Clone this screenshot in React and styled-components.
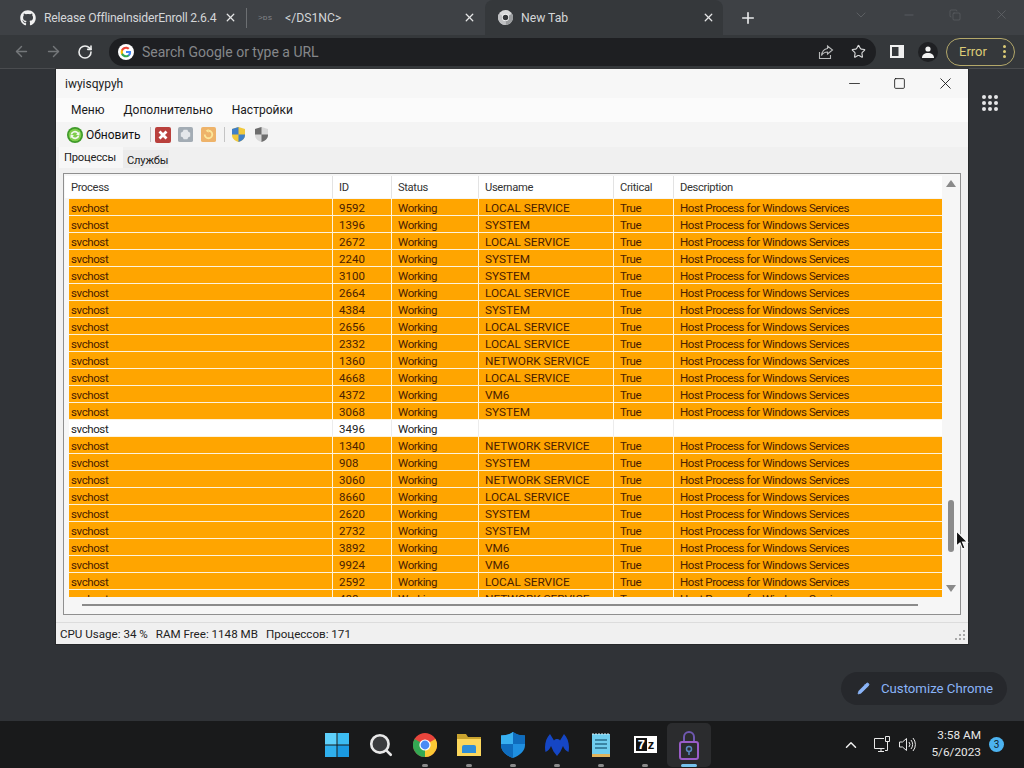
import styled, { createGlobalStyle } from "styled-components";
import { FaGithub } from "react-icons/fa";
import { ArrowLeft, ArrowRight, RotateCw, Star, X, Plus, ChevronDown, ChevronUp, Minus, Square, Copy, Pencil, Search } from "lucide-react";

const GlobalStyle = createGlobalStyle`
  html, body { margin: 0; padding: 0; background: #303337; overflow: hidden; }
  * { box-sizing: border-box; }
`;

const Screen = styled.div`
  width: 1024px;
  height: 768px;
  display: flex;
  flex-direction: column;
  font-family: Roboto, "Noto Sans", sans-serif;
  position: relative;
  overflow: hidden;
`;

/* chrome */
const TabStrip = styled.div`
  height: 35px;
  background: #3e4145;
  display: flex;
  align-items: stretch;
  color: #dfe1e3;
`;
const Tab = styled.div`
  width: ${(p) => p.$w}px;
  display: flex;
  align-items: center;
  gap: 8px;
  padding-left: ${(p) => p.$pad}px;
  background: ${(p) => (p.$active ? "#35383b" : "transparent")};
  border-radius: ${(p) => (p.$active ? "8px 8px 0 0" : "0")};
  font-size: 12.2px;
  white-space: nowrap;
`;
const TabTitle = styled.span`
  width: ${(p) => p.$w}px;
  color: #d4d6d8;
  letter-spacing: ${(p) => (p.$tight ? "-0.2px" : "0")};
`;
const TabClose = styled.span`
  display: flex;
  margin-left: auto;
  margin-right: ${(p) => p.$mr}px;
  color: #e4e5e6;
`;
const TermGlyph = styled.span`
  font-size: 8px;
  color: #85878a;
  font-family: "Liberation Mono", monospace;
  width: 16px;
  margin-right: 3px;
`;
const TabDivider = styled.div`
  width: 1px;
  height: 20px;
  background: #6c6f72;
  align-self: center;
`;
const NewTab = styled.div`
  display: flex;
  align-items: center;
  margin-left: 16px;
  color: #e8e9ea;
`;
const WinControls = styled.div`
  margin-left: auto;
  display: flex;
  align-items: center;
  gap: 33px;
  padding: 0 15px 6px 0;
  color: #63666a;
`;
const ToolBar = styled.div`
  height: 34px;
  background: #35383b;
  display: flex;
  align-items: center;
  padding-left: 13px;
  border-bottom: 1px solid #4a4c4f;
`;
const NavIcon = styled.span`
  display: flex;
  width: 32px;
  color: ${(p) => (p.$on ? "#eceded" : "#74777a")};
`;
const Omnibox = styled.div`
  width: 767px;
  height: 28px;
  border-radius: 14px;
  background: #1e1f22;
  display: flex;
  align-items: center;
  padding: 0 10px 0 9px;
`;
const OmniText = styled.span`
  margin-left: 8px;
  font-size: 14px;
  color: #85878a;
`;
const OmniIcons = styled.div`
  margin-left: auto;
  display: flex;
  align-items: center;
  gap: 17px;
  color: #d8d9da;
`;
const ToolRight = styled.div`
  display: flex;
  align-items: center;
  margin-left: 14px;
`;
const Avatar = styled.span`
  width: 20px;
  height: 20px;
  margin-left: 14px;
  border-radius: 50%;
  background: #1f2023;
  display: flex;
  align-items: center;
  justify-content: center;
`;
const ErrorPill = styled.div`
  margin-left: 8px;
  width: 69px;
  height: 28px;
  border: 1px solid #b4a86a;
  border-radius: 14px;
  display: flex;
  align-items: center;
  justify-content: space-between;
  padding: 0 8px 0 12px;
  color: #dccb76;
  font-size: 13px;
`;
const Dots = styled.span`
  display: flex;
  flex-direction: column;
  gap: 2px;
  i { width: 3px; height: 3px; border-radius: 50%; background: #dccb76; display: block; }
`;

/* new tab page behind the window */
const Page = styled.div`
  flex: 1;
  position: relative;
  background: #303337;
  display: flex;
  flex-direction: column;
  align-items: flex-end;
  padding: 26px 17px 16px 0;
`;
const AppsGrid = styled.div`
  display: grid;
  grid-template-columns: repeat(3, 4px);
  gap: 2px;
  margin-right: 9px;
  i { width: 4px; height: 4px; border-radius: 50%; background: #e5e6e7; display: block; }
`;
const CustomizeBtn = styled.div`
  margin-top: auto;
  height: 33px;
  width: 166px;
  border-radius: 17px;
  background: #26282c;
  display: flex;
  align-items: center;
  gap: 11px;
  padding-left: 16px;
  font-size: 13.2px;
  color: #8ab4f8;
  svg { color: #8ab4f8; }
`;

/* the app window */
const Win = styled.div`
  position: absolute;
  left: 56px;
  top: 0;
  width: 912px;
  height: 575px;
  background: #f0f0f0;
  display: flex;
  flex-direction: column;
  color: #111;
  box-shadow: 0 0 0 1px rgba(20, 20, 20, 0.35);
`;
const TitleBar = styled.div`
  height: 29px;
  background: #f7f7f7;
  display: flex;
  align-items: center;
  padding-left: 9px;
  font-size: 12px;
  color: #222;
`;
const TitleControls = styled.div`
  margin-left: auto;
  display: flex;
  align-items: center;
  gap: 30px;
  padding-right: 13px;
  color: #111;
`;
const MenuBar = styled.div`
  height: 24px;
  background: #fbfbfb;
  display: flex;
  align-items: center;
  padding-left: 15px;
  gap: 19px;
  font-size: 12px;
  color: #1a1a1a;
`;
const Tools = styled.div`
  height: 25px;
  background: #f4f4f4;
  display: flex;
  align-items: center;
  padding-left: 11px;
  font-size: 12px;
  color: #111;
`;
const ToolLabel = styled.span`
  margin-left: 3px;
  margin-right: 9px;
`;
const ToolSep = styled.span`
  width: 1px;
  height: 15px;
  background: #c4c4c4;
  margin-right: ${(p) => p.$mr}px;
`;
const ToolIcon = styled.span`
  display: flex;
  margin-right: ${(p) => p.$mr}px;
`;
const TabsRow = styled.div`
  height: 21px;
  padding-left: 3px;
  display: flex;
  align-items: flex-end;
  font-size: 11.2px;
  letter-spacing: -0.2px;
  color: #222;
`;
const AppTab = styled.div`
  height: ${(p) => (p.$active ? 21 : 18)}px;
  width: ${(p) => p.$w}px;
  padding: ${(p) => (p.$active ? "0 0 0 5px" : "3px 0 0 4px")};
  background: ${(p) => (p.$active ? "#f7f7f7" : "#ebebeb")};
  display: flex;
  align-items: center;
`;
const Panel = styled.div`
  margin: 5px 7px 0;
  height: 442px;
  background: #f6f6f6;
  border: 1px solid #8f8f8f;
  position: relative;
  display: flex;
  flex-direction: column;
  padding: 2px 0 0 1px;
`;
const ListHead = styled.div`
  display: grid;
  grid-template-columns: 268px 59px 87px 135px 60px 268px;
  height: 22px;
  width: 877px;
  background: #fff;
  font-size: 11.2px;
  letter-spacing: -0.35px;
  color: #333;
`;
const HeadCell = styled.div`
  padding-left: 6px;
  display: flex;
  align-items: center;
  border-right: 1px solid #e3e3e3;
  &:last-child { border-right: 0; }
`;
const ListBody = styled.div`
  height: 398px;
  overflow: hidden;
  padding-left: 4px;
  margin-top: 1px;
  background: #f6f6f6;
`;
const Row = styled.div`
  display: grid;
  grid-template-columns: 264px 59px 87px 135px 60px 268px;
  height: 17px;
  width: 873px;
  background: ${(p) => (p.$hot ? "#ffa500" : "#fff")};
  border-bottom: 1px solid #fdf3dc;
  font-size: 11.5px;
  color: ${(p) => (p.$hot ? "#4a2000" : "#222")};
`;
const Cell = styled.div`
  padding: 1px 0 0 ${(p) => (p.$first ? 2 : 6)}px;
  line-height: 16px;
  white-space: nowrap;
  overflow: hidden;
  letter-spacing: ${(p) => (p.$plain ? "0" : "-0.4px")};
  font-size: ${(p) => (p.$caps ? "11.8px" : "inherit")};
  border-right: 1px solid ${(p) => (p.$hot ? "#fff3d8" : "#ececec")};
  &:last-child { border-right: 0; }
`;
const VBar = styled.div`
  position: absolute;
  left: 880px;
  top: 0;
  bottom: 0;
  width: 16px;
`;
const ArrowUp = styled.span`
  position: absolute;
  left: 2px;
  top: 6px;
  width: 0;
  height: 0;
  border: 5px solid transparent;
  border-top: 0;
  border-bottom: 7px solid #8a8a8a;
`;
const ArrowDown = styled.span`
  position: absolute;
  left: 2px;
  top: 411px;
  width: 0;
  height: 0;
  border: 5px solid transparent;
  border-bottom: 0;
  border-top: 7px solid #8a8a8a;
`;
const VThumb = styled.span`
  position: absolute;
  left: 4px;
  top: 326px;
  width: 6px;
  height: 52px;
  border-radius: 3px;
  background: #8b8b8b;
`;
const HThumb = styled.span`
  position: absolute;
  left: 18px;
  top: 430px;
  width: 836px;
  height: 2px;
  background: #8b8b8b;
`;
const StatusBar = styled.div`
  margin-top: 7px;
  flex: 1;
  border-top: 1px solid #dcdcdc;
  display: flex;
  align-items: center;
  padding: 0 4px;
  gap: 8px;
  font-size: 11.6px;
  color: #222;
  position: relative;
`;
const Grip = styled.span`
  position: absolute;
  right: 2px;
  bottom: 2px;
  display: flex;
`;
const Cursor = styled.svg`
  position: absolute;
  left: 955px;
  top: 530px;
`;

/* taskbar */
const Taskbar = styled.div`
  height: 47px;
  background: #191a1b;
  display: flex;
  align-items: center;
  position: relative;
`;
const TaskIcons = styled.div`
  margin-left: 315px;
  display: flex;
`;
const TaskItem = styled.div`
  width: 44px;
  height: 44px;
  display: flex;
  align-items: center;
  justify-content: center;
  position: relative;
  border-radius: 5px;
  background: ${(p) => (p.$active ? "#2b2c2e" : "transparent")};
  &::after {
    content: "";
    display: ${(p) => (p.$dot ? "block" : "none")};
    position: absolute;
    bottom: 0;
    left: 50%;
    transform: translateX(-50%);
    width: ${(p) => (p.$active ? 16 : 6)}px;
    height: 3px;
    border-radius: 2px;
    background: ${(p) => (p.$active ? "#76c2ee" : "#8a8a8a")};
  }
`;
const SevenZ = styled.span`
  width: 23px;
  height: 17px;
  background: #fff;
  color: #111;
  display: flex;
  align-items: center;
  justify-content: center;
  gap: 1px;
  font-family: "Liberation Sans", sans-serif;
  font-size: 13px;
  font-weight: 700;
`;
const SevenBox = styled.span`
  background: #111;
  color: #fff;
  width: 11px;
  height: 13px;
  line-height: 13px;
  text-align: center;
`;
const Tray = styled.div`
  margin-left: auto;
  display: flex;
  align-items: center;
  color: #eee;
  padding-right: 20px;
`;
const TrayIcon = styled.span`
  display: flex;
  margin-left: ${(p) => p.$ml}px;
`;
const Clock = styled.div`
  margin-left: 15px;
  margin-top: -2px;
  text-align: right;
  font-size: 11.8px;
  line-height: 17px;
  color: #e8e8e8;
`;
const Badge = styled.span`
  width: 15px;
  height: 15px;
  margin-left: 8px;
  border-radius: 50%;
  background: #4cb3f0;
  color: #10222e;
  font-size: 10px;
  display: flex;
  align-items: center;
  justify-content: center;
`;

const L = "LOCAL SERVICE";
const S = "SYSTEM";
const N = "NETWORK SERVICE";
const V = "VM6";
const rows = [
  ["9592", L], ["1396", S], ["2672", L], ["2240", S], ["3100", S], ["2664", L],
  ["4384", S], ["2656", L], ["2332", L], ["1360", N], ["4668", L], ["4372", V],
  ["3068", S], ["3496", ""], ["1340", N], ["908", S], ["3060", N], ["8660", L],
  ["2620", S], ["2732", S], ["3892", V], ["9924", V], ["2592", L], ["488", N],
];

const ChromeIcon = ({ size = 16, dark }) => (
  <svg width={size} height={size} viewBox="0 0 24 24">
    <circle cx="12" cy="12" r="12" fill={dark ? "#d9dadb" : "#e8453c"} />
    <path d="M12 12 L22.4 6 A12 12 0 0 1 12 24 Z" fill={dark ? "#9a9c9e" : "#fcc934"} />
    <path d="M12 12 L12 24 A12 12 0 0 1 1.6 6 Z" fill={dark ? "#bfc0c2" : "#34a853"} />
    <circle cx="12" cy="12" r="5.6" fill="#fff" />
    <circle cx="12" cy="12" r="4.4" fill={dark ? "#35383b" : "#4b8bf5"} />
  </svg>
);

const GoogleG = () => (
  <svg width="16" height="16" viewBox="0 0 24 24">
    <circle cx="12" cy="12" r="12" fill="#fff" />
    <path d="M19.6 12.2c0-.6-.1-1.1-.2-1.6H12v3h4.3c-.2 1-.7 1.8-1.6 2.4v2h2.6c1.5-1.4 2.3-3.400 2.300-5.800z" fill="#4285f4" />
    <path d="M12 20c2.200 0 4-.7 5.300-1.900l-2.600-2c-.7.5-1.600.8-2.700.8-2.100 0-3.900-1.400-4.500-3.300H4.800v2.100C6.100 18.300 8.800 20 12 20z" fill="#34a853" />
    <path d="M7.500 13.600c-.3-1-.3-2.100 0-3.100V8.400H4.800c-1.100 2.200-1.100 5 0 7.200z" fill="#fbbc05" />
    <path d="M12 7.200c1.200 0 2.200.4 3 1.200l2.300-2.300C15.900 4.800 14.100 4 12 4 8.800 4 6.100 5.700 4.800 8.400l2.700 2.100c.6-1.900 2.400-3.300 4.500-3.300z" fill="#ea4335" />
  </svg>
);

// four-quadrant shield of the toolbar
const Shield = ({ a, b }) => (
  <svg width="13" height="15" viewBox="0 0 13 15">
    <path d="M6.500 0L13 2v6c0 3.500-3 6-6.500 7C3 14 0 11.500 0 8V2z" fill={a} />
    <path d="M6.500 0v7.500H0V2zM6.500 7.500H13V8c0 3.500-3 6-6.500 7z" fill={b} />
  </svg>
);

const App = () => (
  <Screen>
    <GlobalStyle />
    <TabStrip>
      <Tab $w={246} $pad={20}>
        <FaGithub size={16} color="#f0f0f0" />
        <TabTitle $w={172} $tight>Release OfflineInsiderEnroll 2.6.4</TabTitle>
        <TabClose $mr={9}><X size={13} strokeWidth={2.4} /></TabClose>
      </Tab>
      <TabDivider />
      <Tab $w={238} $pad={11}>
        <TermGlyph>&gt;ᴅs</TermGlyph>
        <TabTitle $w={90}>&lt;/DS1NC&gt;</TabTitle>
        <TabClose $mr={9}><X size={13} strokeWidth={2.4} /></TabClose>
      </Tab>
      <Tab $w={238} $pad={13} $active>
        <ChromeIcon size={15} dark />
        <TabTitle $w={60}>New Tab</TabTitle>
        <TabClose $mr={8}><X size={13} strokeWidth={2.4} /></TabClose>
      </Tab>
      <NewTab><Plus size={18} strokeWidth={2.2} /></NewTab>
      <WinControls>
        <ChevronDown size={16} strokeWidth={1.2} />
        <Minus size={14} strokeWidth={1.2} />
        <Copy size={12} strokeWidth={1.2} />
        <X size={15} strokeWidth={1.2} />
      </WinControls>
    </TabStrip>
    <ToolBar>
      <NavIcon><ArrowLeft size={17} /></NavIcon>
      <NavIcon><ArrowRight size={17} /></NavIcon>
      <NavIcon $on><RotateCw size={16} strokeWidth={2.4} /></NavIcon>
      <Omnibox>
        <GoogleG />
        <OmniText>Search Google or type a URL</OmniText>
        <OmniIcons>
          <svg width="16" height="16" viewBox="0 0 16 16" fill="none" stroke="#b8b9ba" strokeWidth="1.1">
            <path d="M1.500 8v6.500h11V11" />
            <path d="M9.500 2l5 4-5 4V8C7 8 5 9 3.500 11.500 4 7.500 6 5 9.500 4.500z" />
          </svg>
          <Star size={15} strokeWidth={1.8} />
        </OmniIcons>
      </Omnibox>
      <ToolRight>
        <svg width="14" height="13" viewBox="0 0 14 13">
          <path d="M0 0h14v13H0z" fill="#f0f0f0" />
          <path d="M2 2h6.500v9H2z" fill="#35383b" />
        </svg>
        <Avatar>
          <svg width="12" height="12" viewBox="0 0 12 12" fill="#f2f2f2">
            <circle cx="6" cy="3" r="2.600" />
            <path d="M0 12c0-3.500 2.500-5 6-5s6 1.500 6 5z" />
          </svg>
        </Avatar>
        <ErrorPill>
          Error
          <Dots><i /><i /><i /></Dots>
        </ErrorPill>
      </ToolRight>
    </ToolBar>
    <Page>
      <AppsGrid>
        {Array.from({ length: 9 }, (_, i) => <i key={i} />)}
      </AppsGrid>
      <CustomizeBtn>
        <Pencil size={13} fill="#8ab4f8" strokeWidth={1.5} />
        Customize Chrome
      </CustomizeBtn>
      <Win>
        <TitleBar>
          iwyisqypyh
          <TitleControls>
            <Minus size={17} strokeWidth={1.1} />
            <Square size={13} strokeWidth={1.5} />
            <X size={19} strokeWidth={1.1} />
          </TitleControls>
        </TitleBar>
        <MenuBar>
          <span>Меню</span>
          <span>Дополнительно</span>
          <span>Настройки</span>
        </MenuBar>
        <Tools>
          <ToolIcon $mr={0}>
            <svg width="16" height="16" viewBox="0 0 16 16">
              <circle cx="8" cy="8" r="8" fill="#3f9a2a" />
              <circle cx="8" cy="8" r="6.300" fill="#7fce4c" />
              <path d="M3.500 7.500a4.500 4.500 0 0 1 8-2l1-1v3.500H9l1.200-1.200a2.800 2.800 0 0 0-5 .7zM12.500 8.500a4.500 4.500 0 0 1-8 2l-1 1V8H7L5.800 9.200a2.800 2.800 0 0 0 5-.7z" fill="#f2f7ee" />
            </svg>
          </ToolIcon>
          <ToolLabel>Обновить</ToolLabel>
          <ToolSep $mr={4} />
          <ToolIcon $mr={7}>
            <svg width="16" height="16" viewBox="0 0 16 16">
              <rect width="16" height="16" rx="2" fill="#b9403c" />
              <path d="M4.500 4.500l7 7M11.500 4.500l-7 7" stroke="#fff" strokeWidth="2.800" />
            </svg>
          </ToolIcon>
          <ToolIcon $mr={8}>
            <svg width="15" height="15" viewBox="0 0 16 16">
              <rect width="16" height="16" rx="2" fill="#a3acb4" />
              <path d="M6 3h4l1 2 2 1v4l-2 1-1 2H6l-1-2-2-1V6l2-1z" fill="#e4e7ea" />
            </svg>
          </ToolIcon>
          <ToolIcon $mr={8}>
            <svg width="15" height="15" viewBox="0 0 16 16">
              <rect width="16" height="16" rx="2" fill="#eeb36a" />
              <path d="M4 8a4 4 0 1 0 4-4" fill="none" stroke="#fbe79a" strokeWidth="2" />
              <path d="M8 2v4L5 4z" fill="#fbe79a" />
            </svg>
          </ToolIcon>
          <ToolSep $mr={7} />
          <ToolIcon $mr={10}><Shield a="#f1c93c" b="#3f7fc8" /></ToolIcon>
          <ToolIcon $mr={0}><Shield a="#d8d8d8" b="#6d6d6d" /></ToolIcon>
        </Tools>
        <TabsRow>
          <AppTab $active $w={64}>Процессы</AppTab>
          <AppTab $w={46}>Службы</AppTab>
        </TabsRow>
        <Panel>
          <ListHead>
            <HeadCell>Process</HeadCell>
            <HeadCell>ID</HeadCell>
            <HeadCell>Status</HeadCell>
            <HeadCell>Username</HeadCell>
            <HeadCell>Critical</HeadCell>
            <HeadCell>Description</HeadCell>
          </ListHead>
          <ListBody>
            {rows.map(([id, user]) => {
              const hot = user !== "";
              return (
                <Row key={id} $hot={hot}>
                  <Cell $first $hot={hot}>svchost</Cell>
                  <Cell $plain $hot={hot}>{id}</Cell>
                  <Cell $hot={hot}>Working</Cell>
                  <Cell $plain $caps $hot={hot}>{user}</Cell>
                  <Cell $hot={hot}>{hot ? "True" : ""}</Cell>
                  <Cell $hot={hot}>{hot ? "Host Process for Windows Services" : ""}</Cell>
                </Row>
              );
            })}
          </ListBody>
          <VBar>
            <ArrowUp />
            <VThumb />
            <ArrowDown />
          </VBar>
          <HThumb />
        </Panel>
        <StatusBar>
          <span>CPU Usage: 34 %</span>
          <span>RAM Free: 1148 MB</span>
          <span>Процессов: 171</span>
          <Grip>
            <svg width="12" height="12" viewBox="0 0 12 12" fill="#a8a8a8">
              <path d="M9 0h2v2H9zM5 4h2v2H5zM9 4h2v2H9zM1 8h2v2H1zM5 8h2v2H5zM9 8h2v2H9z" />
            </svg>
          </Grip>
        </StatusBar>
      </Win>
    </Page>
    <Cursor width="14" height="22" viewBox="0 0 14 22">
      <path d="M1.500 1v15l3.500-3 2.500 6 2.500-1-2.500-6h5z" fill="#111" stroke="#fff" strokeWidth="1.100" />
    </Cursor>
    <Taskbar>
      <TaskIcons>
        <TaskItem>
          <svg width="24" height="24" viewBox="0 0 24 24">
            <path d="M0 0h11.500v11.500H0z" fill="#5ed0fb" />
            <path d="M12.500 0H24v11.500H12.500z" fill="#3cbcf2" />
            <path d="M0 12.500h11.500V24H0z" fill="#2fb0ee" />
            <path d="M12.500 12.500H24V24H12.500z" fill="#1a9ae2" />
          </svg>
        </TaskItem>
        <TaskItem>
          <Search size={26} color="#e8e8e8" strokeWidth={2.4} fill="#3a3b3d" />
        </TaskItem>
        <TaskItem $dot><ChromeIcon size={24} /></TaskItem>
        <TaskItem $dot>
          <svg width="24" height="23" viewBox="0 0 24 23">
            <path d="M0 1h9l2 3h13v19H0z" fill="#c9a32e" />
            <path d="M0 6h24v17H0z" fill="#fcd75c" />
            <path d="M5 14q0-2 2-2h10q2 0 2 2v6H5z" fill="#2f8ed8" />
          </svg>
        </TaskItem>
        <TaskItem $dot>
          <svg width="24" height="26" viewBox="0 0 24 26">
            <path d="M12 0c3 2.500 7 3.500 12 3.500V13c0 6-5 10.500-12 13C5 23.500 0 19 0 13V3.500C5 3.500 9 2.500 12 0z" fill="#1f8fe0" />
            <path d="M12 0c3 2.500 7 3.500 12 3.500V12H12zM0 12h12v14C5 23.500 0 19 0 13z" fill="#0f6cbd" />
            <path d="M12 0v12H0V3.500C5 3.500 9 2.500 12 0z" fill="#38b0f0" />
          </svg>
        </TaskItem>
        <TaskItem $dot>
          <svg width="24" height="22" viewBox="0 0 24 22">
            <path d="M12 5c1.500 0 2.500.5 3 1.500L19 0c4 4 6 11 4.500 18-2.500-1-4.500-3-5.500-6l-2.500 5.500-3.500 4.500-3.500-4.500L6 12c-1 3-3 5-5.500 6C-1 11 1 4 5 0l4 6.500C9.500 5.500 10.500 5 12 5z" fill="#1546c4" />
          </svg>
        </TaskItem>
        <TaskItem $dot>
          <svg width="18" height="24" viewBox="0 0 18 24">
            <path d="M0 1h18v20H0z" fill="#6fcdee" />
            <path d="M0 21h18v3H0z" fill="#e0b45c" />
            <path d="M3 7h12M3 11h12M3 15h12" stroke="#2a6d8c" strokeWidth="1.500" />
            <path d="M1 0v2M4 0v2M7 0v2M10 0v2M13 0v2M16 0v2" stroke="#d8eef6" />
          </svg>
        </TaskItem>
        <TaskItem $dot>
          <SevenZ><SevenBox>7</SevenBox>z</SevenZ>
        </TaskItem>
        <TaskItem $dot $active>
          <svg width="20" height="30" viewBox="0 0 20 30" fill="none">
            <path d="M5 12V7a5 5 0 0 1 10 0v5" stroke="#6f58b0" strokeWidth="2" />
            <rect x="1" y="12" width="18" height="17" rx="2" stroke="#9a5cc8" strokeWidth="2" />
            <circle cx="10" cy="19" r="2.500" stroke="#5a88c0" strokeWidth="1.500" />
            <path d="M10 21.500V25" stroke="#5a88c0" strokeWidth="1.500" />
          </svg>
        </TaskItem>
      </TaskIcons>
      <Tray>
        <ChevronUp size={18} strokeWidth={2} />
        <TrayIcon $ml={14}>
          <svg width="17" height="17" viewBox="0 0 17 17" fill="none" stroke="#e8e8e8" strokeWidth="1">
            <path d="M10 2.500H.5v10h10M4 15.500h6M7 12.500v3" />
            <path d="M11.500.5h4v5h-4zM13.500 5.500v9H11" />
          </svg>
        </TrayIcon>
        <TrayIcon $ml={8}>
          <svg width="17" height="15" viewBox="0 0 17 15" fill="none" stroke="#e8e8e8" strokeWidth="1">
            <path d="M.5 5v5h3l4 3.500v-12l-4 3.500z" />
            <path d="M10 5a4 4 0 0 1 0 5M12 3a7 7 0 0 1 0 9M14 1a10 10 0 0 1 0 13" />
          </svg>
        </TrayIcon>
        <Clock>
          <div>3:58 AM</div>
          <div>5/6/2023</div>
        </Clock>
        <Badge>3</Badge>
      </Tray>
    </Taskbar>
  </Screen>
);

export default App;
